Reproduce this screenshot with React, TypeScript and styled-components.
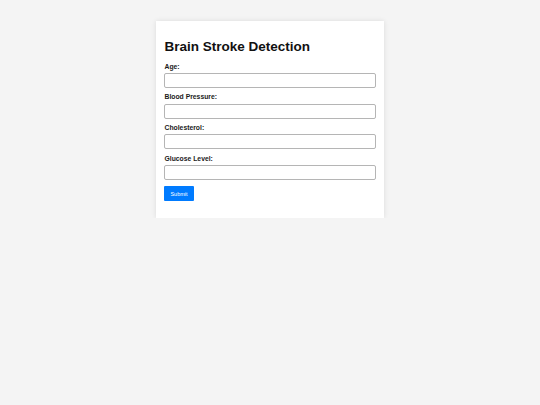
import styled, { createGlobalStyle } from 'styled-components';

const GlobalStyle = createGlobalStyle`
  html, body {
    margin: 0;
    padding: 0;
    background: #f4f4f4;
    font-family: "Liberation Sans", Arial, sans-serif;
  }
`;

const fields = ['Age:', 'Blood Pressure:', 'Cholesterol:', 'Glucose Level:'];

function App() {
  return (
    <>
      <GlobalStyle />
      <Page>
        <Card>
          <Title>Brain Stroke Detection</Title>
          <Form onSubmit={(e) => e.preventDefault()}>
            {fields.map((f) => (
              <Field key={f}>
                <Label>{f}</Label>
                <Input type="text" />
              </Field>
            ))}
            <Button type="submit">Submit</Button>
          </Form>
        </Card>
      </Page>
    </>
  );
}

export default App;

const Page = styled.div`
  display: flex;
  justify-content: center;
  padding-top: 21px;
`;

const Card = styled.div`
  width: 228px;
  box-sizing: border-box;
  background: #fff;
  padding: 8px 8px 17px;
  box-shadow: 0 0 5px rgba(0, 0, 0, 0.1);
`;

const Title = styled.h1`
  font-size: 13.5px;
  line-height: 15.4px;
  font-weight: bold;
  color: #111;
  margin: 9.6px 0 8.7px 0.5px;
`;

const Form = styled.form`
  display: flex;
  flex-direction: column;
`;

const Field = styled.div`
  display: flex;
  flex-direction: column;
  margin-bottom: 5.4px;
`;

const Label = styled.label`
  font-size: 6.8px;
  line-height: 8px;
  font-weight: bold;
  color: #1a1a1a;
  margin: 0 0 2.3px 0.5px;
`;

const Input = styled.input`
  width: 212px;
  height: 15px;
  box-sizing: border-box;
  border: 1px solid #b5b5b5;
  border-radius: 2px;
  padding: 0 4px;
  font-size: 7px;
  outline: none;
`;

const Button = styled.button`
  width: 30px;
  height: 15px;
  margin-top: 0.6px;
  padding: 0;
  border: none;
  border-radius: 1px;
  background: #007bff;
  color: #fff;
  font-family: "Liberation Sans", Arial, sans-serif;
  font-size: 5.5px;
  cursor: pointer;
`;
